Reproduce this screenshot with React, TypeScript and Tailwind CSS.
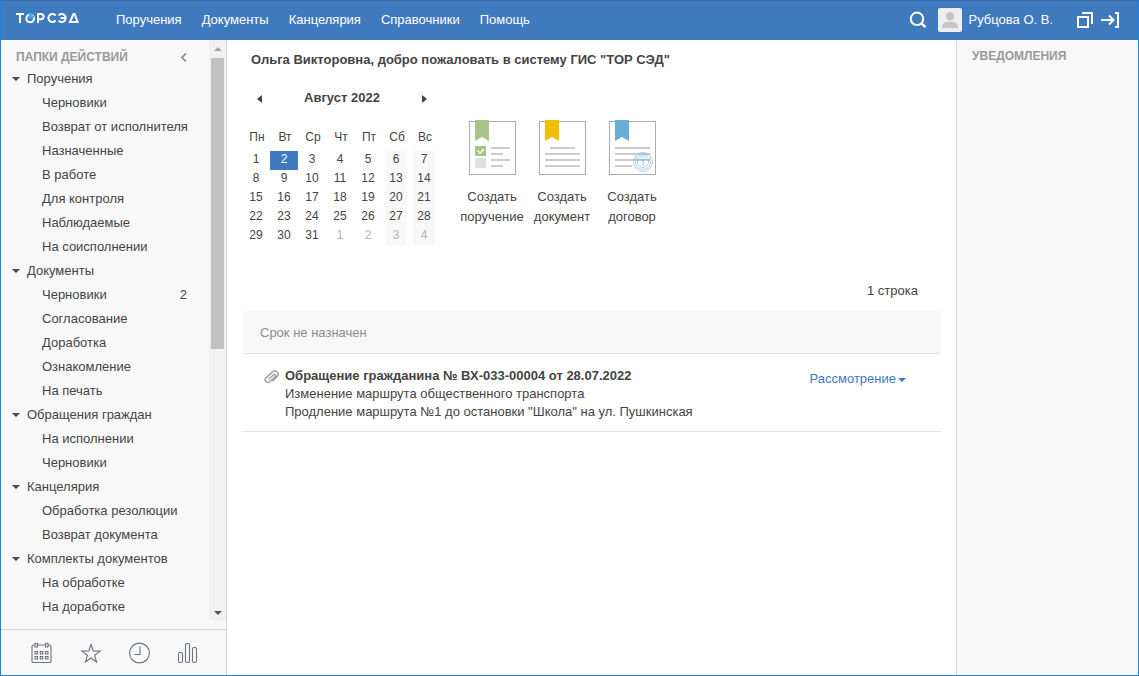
import { useState } from 'react'
import type { ReactNode } from 'react'
import clsx from 'clsx'

type Folder = { title: string; items: { label: string; count?: number }[] }

const NAV = ['Поручения', 'Документы', 'Канцелярия', 'Справочники', 'Помощь']

const FOLDERS: Folder[] = [
  {
    title: 'Поручения',
    items: [
      { label: 'Черновики' },
      { label: 'Возврат от исполнителя' },
      { label: 'Назначенные' },
      { label: 'В работе' },
      { label: 'Для контроля' },
      { label: 'Наблюдаемые' },
      { label: 'На соисполнении' },
    ],
  },
  {
    title: 'Документы',
    items: [
      { label: 'Черновики', count: 2 },
      { label: 'Согласование' },
      { label: 'Доработка' },
      { label: 'Ознакомление' },
      { label: 'На печать' },
    ],
  },
  { title: 'Обращения граждан', items: [{ label: 'На исполнении' }, { label: 'Черновики' }] },
  { title: 'Канцелярия', items: [{ label: 'Обработка резолюции' }, { label: 'Возврат документа' }] },
  { title: 'Комплекты документов', items: [{ label: 'На обработке' }, { label: 'На доработке' }] },
]

const WEEKDAYS = ['Пн', 'Вт', 'Ср', 'Чт', 'Пт', 'Сб', 'Вс']

// 31 days of August plus the first four of September
const WEEKS = Array.from({ length: 5 }, (_, w) =>
  Array.from({ length: 7 }, (_, d) => {
    const n = w * 7 + d + 1
    return { day: n > 31 ? n - 31 : n, outside: n > 31 }
  })
)

function Logo() {
  return (
    <svg width="63" height="12" viewBox="0 0 63 12" fill="none" stroke="#fff" strokeWidth="2" aria-hidden="true">
      <path d="M0 2h8M4 2v9" />
      <circle cx="14.200" cy="6.500" r="3.800" />
      <path d="M13.500 0l5.500 5-2.500 1.500h-2.500l-1.500-2z" fill="#35b4f5" stroke="none" />
      <path d="M22 11V2h3a2.600 2.600 0 0 1 0 5.200h-3" />
      <path d="M39.600 3.600a4 4 0 1 0 0 4.800" />
      <path d="M42.600 3.400a4 4 0 1 1 0 5.200M44.500 6h6" />
      <path d="M54 10h7.600L58.600 2h-1.200z" />
    </svg>
  )
}

function Header() {
  return (
    <header className="flex h-10 items-center border-t border-[#3a6ca9] bg-[#3f79be] pb-[2px] pl-[15px] pr-[18px] text-white">
      <a href="#home" aria-label="ТОР СЭД" className="mb-1 w-[100px]">
        <Logo />
      </a>
      <nav className="flex flex-1 gap-5">
        {NAV.map((item) => (
          <a key={item} href="#nav" className="hover:underline">
            {item}
          </a>
        ))}
      </nav>
      <button type="button" aria-label="Поиск">
        <svg width="18" height="18" viewBox="0 0 18 18" fill="none" stroke="#fff" strokeWidth="2">
          <circle cx="8" cy="7.8" r="6.2" />
          <path d="M12.2 12.2l4.3 4" strokeWidth="2.4" />
        </svg>
      </button>
      <a href="#profile" className="ml-[11px] flex items-center gap-[6px]">
        <svg width="24" height="24" viewBox="0 0 24 24" aria-hidden="true">
          <rect width="24" height="24" rx="2" fill="#eee" />
          <circle cx="12" cy="8.2" r="4.2" fill="#c6c6c6" />
          <path d="M4 20v-1.500c0-3 3.200-4.700 8-4.700s8 1.700 8 4.700V20z" fill="#c6c6c6" />
        </svg>
        Рубцова О. В.
      </a>
      <button type="button" aria-label="Новое окно" className="ml-6">
        <svg width="17" height="16" viewBox="0 0 17 16" fill="none" stroke="#fff" strokeWidth="2">
          <path d="M1 5h10v10H1z" />
          <path d="M5 1h10v11" />
        </svg>
      </button>
      <button type="button" aria-label="Выход" className="ml-[7px]">
        <svg width="19" height="16" viewBox="0 0 19 16" fill="none" stroke="#fff" strokeWidth="2">
          <path d="M0 8h12M8 3.500L12.500 8 8 12.500M14 1h3v14h-3" />
        </svg>
      </button>
    </header>
  )
}

function Caret({ className }: { className?: string }) {
  return (
    <svg width="8" height="4" viewBox="0 0 8 4" fill="currentColor" className={className} aria-hidden="true">
      <path d="M0 0h8L4 4z" />
    </svg>
  )
}

function FolderGroup({ folder }: { folder: Folder }) {
  const [open, setOpen] = useState(true)

  return (
    <section>
      <button
        type="button"
        aria-expanded={open}
        onClick={() => setOpen(!open)}
        className="flex h-6 w-full items-center gap-[7px] pl-[11px] text-left"
      >
        <Caret className={clsx(!open && '-rotate-90')} />
        {folder.title}
      </button>
      {open && (
        <ul>
          {folder.items.map((item) => (
            <li key={item.label}>
              <a
                href="#folder"
                className="flex h-6 items-center justify-between pl-[41px] pr-[22px] whitespace-nowrap hover:bg-[#ececec]"
              >
                <span>{item.label}</span>
                {item.count && <span>{item.count}</span>}
              </a>
            </li>
          ))}
        </ul>
      )}
    </section>
  )
}

function Scrollbar() {
  return (
    <div className="flex w-[17px] shrink-0 flex-col bg-[#f1f1f1]">
      <button type="button" aria-label="Вверх" className="flex h-[18px] items-center justify-center text-[#a3a3a3]">
        <Caret className="rotate-180" />
      </button>
      <div className="mx-[2px] grow-8 bg-[#c1c1c1]" />
      <div className="grow-7" />
      <button type="button" aria-label="Вниз" className="flex h-[17px] items-center justify-center text-[#505050]">
        <Caret />
      </button>
    </div>
  )
}

function ToolButton({ label, children }: { label: string; children: ReactNode }) {
  return (
    <button type="button" aria-label={label}>
      <svg width="22" height="22" viewBox="0 0 22 22" fill="none" stroke="#6c7180" strokeWidth="1.1">
        {children}
      </svg>
    </button>
  )
}

function Sidebar() {
  return (
    <aside className="flex w-[226px] shrink-0 flex-col border-r border-[#d5d5d5] bg-[#f8f8f8]">
      <div className="mb-2 flex flex-1">
        <div className="min-w-0 flex-1 pb-[2px]">
          <div className="flex h-[27px] items-center justify-between pt-[7px] pl-[15px] pr-[22px]">
            <h2 className="text-xs leading-[18px] font-bold text-[#999]">ПАПКИ ДЕЙСТВИЙ</h2>
            <button type="button" aria-label="Свернуть">
              <svg width="6" height="9" viewBox="0 0 6 9" fill="none" stroke="#8a8a8a" strokeWidth="1.600">
                <path d="M5 .5l-4 4 4 4" />
              </svg>
            </button>
          </div>
          {FOLDERS.map((folder) => (
            <FolderGroup key={folder.title} folder={folder} />
          ))}
        </div>
        <Scrollbar />
      </div>
      <div className="flex h-[46px] items-center justify-between border-t border-[#d5d5d5] pl-[30px] pr-[27px]">
        <ToolButton label="Календарь">
          <path d="M3.500 3H3a2 2 0 0 0-2 2v14.500a1 1 0 0 0 1 1h17a1 1 0 0 0 1-1V5a2 2 0 0 0-2-2h-1M6.500 3h8" />
          <path d="M4 1.500h2.500V5H4zM14.500 1.500H17V5h-2.500z" />
          <path d="M4 9.500h2.500V12H4zM9.300 9.500h2.500V12H9.300zM14.500 9.500H17V12h-2.500zM4 14.500h2.500V17H4zM9.300 14.500h2.500V17H9.300zM14.500 14.500H17V17h-2.500z" />
        </ToolButton>
        <ToolButton label="Избранное">
          <path d="M11 2.500l2.200 6.500 7 .1-5.600 4.200 2 6.700-5.600-4-5.600 4 2-6.700L1.800 9.100l7-.1z" />
        </ToolButton>
        <ToolButton label="История">
          <circle cx="11.500" cy="11" r="9.900" />
          <path d="M12 4.500V12.500H6.500" />
        </ToolButton>
        <ToolButton label="Отчёты">
          <rect x="1.500" y="10.500" width="4" height="10" rx="1.500" />
          <rect x="8.500" y="1.500" width="4" height="19" rx="1.500" />
          <rect x="15.500" y="5.500" width="4" height="15" rx="1.500" />
        </ToolButton>
      </div>
    </aside>
  )
}

function Calendar() {
  const [selected, setSelected] = useState(2)

  return (
    <div className="w-[196px]">
      <div className="flex h-[18px] items-center justify-between pl-[15px] pr-[11px]">
        <button type="button" aria-label="Предыдущий месяц" className="pt-[2px]">
          <svg width="5" height="8" viewBox="0 0 5 8" fill="#444">
            <path d="M5 0v8L0 4z" />
          </svg>
        </button>
        <h2 className="font-bold">Август 2022</h2>
        <button type="button" aria-label="Следующий месяц" className="pt-[2px]">
          <svg width="5" height="8" viewBox="0 0 5 8" fill="#444">
            <path d="M0 0v8l5-4z" />
          </svg>
        </button>
      </div>
      <table className="mt-5 w-full table-fixed text-center text-xs">
        <thead>
          <tr>
            {WEEKDAYS.map((name) => (
              <th key={name} scope="col" className="h-6 pb-1 pl-[2px] font-normal">
                {name}
              </th>
            ))}
          </tr>
        </thead>
        <tbody>
          {WEEKS.map((week, w) => (
            <tr key={w}>
              {week.map(({ day, outside }, d) => (
                <td key={d} className="p-0">
                  <button
                    type="button"
                    onClick={() => !outside && setSelected(day)}
                    className={clsx(
                      'block h-[19px] pb-[3px]',
                      d > 4 ? 'mx-[3px] w-[22px] bg-[#f8f8f8]' : 'w-full',
                      outside && 'text-[#b5b5b5]',
                      !outside && day === selected && 'bg-[#3f79be] text-white'
                    )}
                  >
                    {day}
                  </button>
                </td>
              ))}
            </tr>
          ))}
        </tbody>
      </table>
    </div>
  )
}

function CreateLink({ noun, color, children }: { noun: string; color: string; children: ReactNode }) {
  return (
    <a href="#create" className="flex w-[70px] flex-col items-center text-center leading-5">
      <svg width="48" height="56" viewBox="-1 0 48 56" fill="none" className="mb-[11px]" aria-hidden="true">
        <rect x=".5" y="1.500" width="46" height="53" fill="#fff" stroke="#ababab" />
        <path d="M6 0h14v21l-7-4-7 4z" fill={color} />
        {children}
      </svg>
      Создать
      <br />
      {noun}
    </a>
  )
}

function CreateLinks() {
  return (
    <div className="ml-[19px] flex pt-[31px]">
      <CreateLink noun="поручение" color="#a9c38b">
        <path d="M6 26h11v10H6z" fill="#a9c38b" />
        <path d="M8.500 30.500l2.500 2.500 4-4" stroke="#fff" strokeWidth="1.500" />
        <path d="M6 38h11v10H6z" fill="#e0e0e0" />
        <path d="M22 28h19M22 34h12M22 40h19M22 46h12" stroke="#ccc" strokeWidth="2" />
      </CreateLink>
      <CreateLink noun="документ" color="#f2bf00">
        <path d="M11 28h25M6 34h35M6 40h35M6 46h35" stroke="#ccc" strokeWidth="2" />
      </CreateLink>
      <CreateLink noun="договор" color="#66aed3">
        <path d="M6 28h35M6 34h35M6 40h35M6 46h17" stroke="#ccc" strokeWidth="2" />
        <g stroke="#66aed3" opacity=".55">
          <circle cx="34" cy="42" r="9.500" />
          <circle cx="34" cy="42" r="7.500" />
          <circle cx="34" cy="42" r="5.500" />
          <path d="M31 39.500h6M34 39.500v6" strokeWidth="1.500" />
        </g>
      </CreateLink>
    </div>
  )
}

function PaperClip() {
  return (
    <svg width="16" height="14" viewBox="0 0 16 14" fill="none" stroke="#a2a2a2" strokeWidth="1.500" aria-hidden="true">
      <path d="M4.600 9.200l5.200-4.600a1.300 1.300 0 0 1 1.800 1.800l-6 5.400a2.700 2.700 0 0 1-3.900-3.700l6.800-6.200a3.300 3.300 0 0 1 4.900 4.400l-5 4.800" />
    </svg>
  )
}

function Main() {
  return (
    <main className="min-w-0 flex-1 px-[15px]">
      <h1 className="pt-[11px] pl-[9px] leading-[18px] font-bold">
        Ольга Викторовна, добро пожаловать в систему ГИС "ТОР СЭД"
      </h1>
      <div className="mt-5 flex">
        <Calendar />
        <CreateLinks />
      </div>
      <p className="mt-9 pr-[23px] text-right leading-[18px]">1 строка</p>
      <section className="mt-[11px]">
        <h2 className="flex h-[43px] items-center rounded-sm border-b border-[#e5e5e5] bg-[#f8f8f8] pt-[2px] pl-[18px] text-[#8c8c8c]">
          Срок не назначен
        </h2>
        <article className="flex gap-[5px] border-b border-[#e5e5e5] pt-[13px] pb-[10px] pl-[22px] pr-[35px] text-[#444]">
          <div className="pt-[3px]">
            <PaperClip />
          </div>
          <div className="flex-1 leading-[18px]">
            <a href="#document" className="font-bold">
              Обращение гражданина № ВХ-033-00004 от 28.07.2022
            </a>
            <p>Изменение маршрута общественного транспорта</p>
            <p>Продление маршрута №1 до остановки "Школа" на ул. Пушкинская</p>
          </div>
          <button type="button" className="mt-[2px] flex items-center gap-[2px] self-start text-[#3f79be]">
            Рассмотрение
            <Caret className="mt-[2px]" />
          </button>
        </article>
      </section>
    </main>
  )
}

export default function App() {
  return (
    <div className="flex min-h-screen flex-col border-x border-b border-[#1883d7] bg-white font-['Liberation_Sans',Arial,sans-serif] text-[13px] text-[#444]">
      <Header />
      <div className="flex flex-1">
        <Sidebar />
        <Main />
        <aside className="w-[182px] shrink-0 border-l border-[#d5d5d5] bg-[#f8f8f8] pt-[7px] pl-[15px]">
          <h2 className="text-xs leading-[18px] font-bold text-[#999]">УВЕДОМЛЕНИЯ</h2>
        </aside>
      </div>
    </div>
  )
}
